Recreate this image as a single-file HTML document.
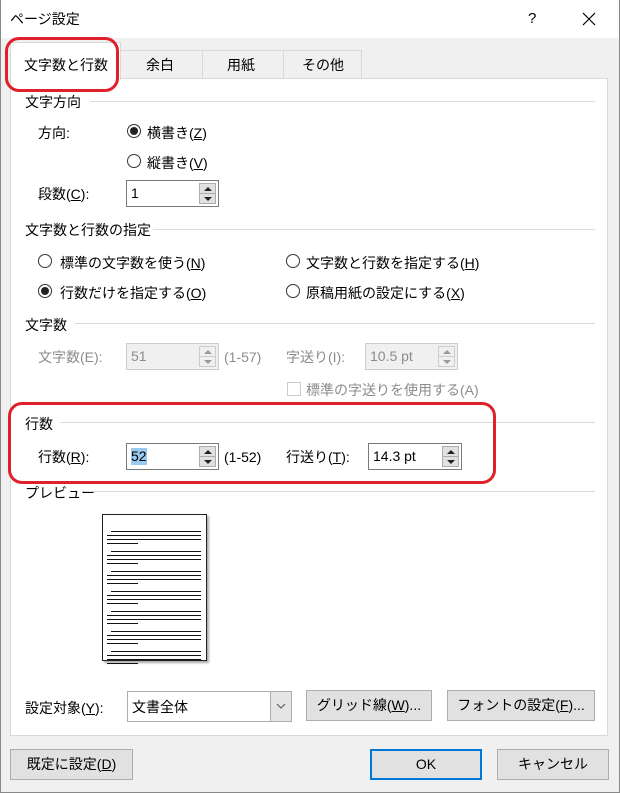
<!DOCTYPE html>
<html><head><meta charset="utf-8"><style>
*{margin:0;padding:0;box-sizing:border-box}
body{width:620px;height:793px;background:#f0f0f0;position:relative;overflow:hidden;font-family:"Liberation Sans","Noto Sans CJK JP",sans-serif;font-size:14px;color:#000}
.a{position:absolute;white-space:nowrap;line-height:16px}
.g{color:#8c8c8c}
.hl{position:absolute;height:1px;background:#dcdcdc}
.rad{position:absolute;width:14px;height:14px;border:1px solid #333;border-radius:50%;background:#fff}
.rad.on::after{content:"";position:absolute;left:2px;top:2px;width:8px;height:8px;border-radius:50%;background:#222}
.spin{position:absolute;height:27px;border:1px solid #7a7a7a;background:#fff}
.spin.dis{border-color:#ccc;background:#f0f0f0}
.spin .t{position:absolute;left:4px;top:4px;line-height:17px}
.spin .b{position:absolute;right:2px;width:17px;height:11px;background:#e1e1e1;border:1px solid #adadad}
.spin.dis .b{border-color:#ccc;background:#f0f0f0}
.b.u{top:2px}.b.d{bottom:2px}
.b.u::after{content:"";position:absolute;left:4px;top:3px;border-left:4px solid transparent;border-right:4px solid transparent;border-bottom:4px solid #222}
.b.d::after{content:"";position:absolute;left:4px;top:3px;border-left:4px solid transparent;border-right:4px solid transparent;border-top:4px solid #222}
.spin.dis .b::after{border-bottom-color:#999;border-top-color:#999}
.btn{position:absolute;height:31px;background:#e1e1e1;border:1px solid #adadad;text-align:center;line-height:29px}
u{text-decoration:underline}
.red{position:absolute;border:3px solid #e0202a;border-radius:14px}
.pl{position:absolute;height:1px;background:#111}
</style></head><body>
<div style="position:absolute;left:0;top:0;width:620px;height:38px;background:#fff"></div>
<div style="position:absolute;left:0;top:0;width:1px;height:793px;background:#888"></div>
<div style="position:absolute;right:0;top:0;width:1px;height:793px;background:#888"></div>
<div style="position:absolute;left:0;bottom:0;width:620px;height:1px;background:#888"></div>
<div class="a" style="left:10px;top:11px;font-size:14px">ページ設定</div>
<div class="a" style="left:528px;top:11px;font-size:15px">?</div>
<svg style="position:absolute;left:582px;top:12px" width="14" height="14"><path d="M1 1L13 13M13 1L1 13" stroke="#000" stroke-width="1.2"/></svg>

<div style="position:absolute;left:120px;top:50px;width:242px;height:29px;background:#f0f0f0;border:1px solid #d9d9d9;border-bottom:none"></div>
<div style="position:absolute;left:202px;top:50px;width:1px;height:28px;background:#d9d9d9"></div>
<div style="position:absolute;left:283px;top:50px;width:1px;height:28px;background:#d9d9d9"></div>
<div style="position:absolute;left:10px;top:78px;width:598px;height:658px;background:#fff;border:1px solid #d9d9d9"></div>
<div style="position:absolute;left:10px;top:42px;width:111px;height:38px;background:#fff;border:1px solid #d9d9d9;border-bottom:none"></div>
<div class="a" style="left:24px;top:57px">文字数と行数</div>
<div class="a" style="left:146px;top:57px">余白</div>
<div class="a" style="left:227px;top:57px">用紙</div>
<div class="a" style="left:302px;top:57px">その他</div>
<div class="red" style="left:5px;top:37px;width:114px;height:55px"></div>

<div class="a" style="left:25px;top:94px">文字方向</div><div class="hl" style="left:90px;top:101px;width:505px"></div>
<div class="a" style="left:38px;top:125px">方向:</div>
<div class="rad on" style="left:127px;top:124px"></div><div class="a" style="left:147px;top:125px">横書き(<u>Z</u>)</div>
<div class="rad" style="left:127px;top:154px"></div><div class="a" style="left:147px;top:155px">縦書き(<u>V</u>)</div>
<div class="a" style="left:38px;top:186px">段数(<u>C</u>):</div>
<div class="spin" style="left:126px;top:180px;width:93px"><span class="t">1</span><div class="b u"></div><div class="b d"></div></div>

<div class="a" style="left:25px;top:222px">文字数と行数の指定</div><div class="hl" style="left:153px;top:229px;width:442px"></div>
<div class="rad" style="left:38px;top:254px"></div><div class="a" style="left:60px;top:255px">標準の文字数を使う(<u>N</u>)</div>
<div class="rad" style="left:286px;top:254px"></div><div class="a" style="left:306px;top:255px">文字数と行数を指定する(<u>H</u>)</div>
<div class="rad on" style="left:38px;top:284px"></div><div class="a" style="left:60px;top:285px">行数だけを指定する(<u>O</u>)</div>
<div class="rad" style="left:286px;top:284px"></div><div class="a" style="left:306px;top:285px">原稿用紙の設定にする(<u>X</u>)</div>

<div class="a" style="left:25px;top:317px">文字数</div><div class="hl" style="left:75px;top:323px;width:520px"></div>
<div class="a g" style="left:38px;top:349px">文字数(E):</div>
<div class="spin dis" style="left:126px;top:343px;width:93px"><span class="t g">51</span><div class="b u"></div><div class="b d"></div></div>
<div class="a g" style="left:224px;top:349px">(1-57)</div>
<div class="a g" style="left:286px;top:349px">字送り(I):</div>
<div class="spin dis" style="left:365px;top:343px;width:93px"><span class="t g">10.5 pt</span><div class="b u"></div><div class="b d"></div></div>
<div style="position:absolute;left:287px;top:382px;width:14px;height:14px;border:1px solid #ccc;background:#fff"></div>
<div class="a g" style="left:306px;top:382px">標準の字送りを使用する(A)</div>

<div class="a" style="left:25px;top:416px">行数</div><div class="hl" style="left:60px;top:422px;width:535px"></div>
<div class="a" style="left:38px;top:449px">行数(<u>R</u>):</div>
<div class="spin" style="left:126px;top:443px;width:93px"><span class="t" style="background:#99c9ef">52</span><div class="b u"></div><div class="b d"></div></div>
<div class="a" style="left:224px;top:449px">(1-52)</div>
<div class="a" style="left:286px;top:449px">行送り(<u>T</u>):</div>
<div class="spin" style="left:368px;top:443px;width:94px"><span class="t">14.3 pt</span><div class="b u"></div><div class="b d"></div></div>
<div class="red" style="left:8px;top:402px;width:488px;height:82px"></div>

<div class="a" style="left:25px;top:485px">プレビュー</div><div class="hl" style="left:85px;top:491px;width:510px"></div>
<div style="position:absolute;left:102px;top:514px;width:105px;height:147px;background:#fff;border:1px solid #222;box-shadow:2px 2px 2px #aaa"></div>

<div class="a" style="left:25px;top:700px">設定対象(<u>Y</u>):</div>
<div style="position:absolute;left:127px;top:691px;width:165px;height:31px;background:#fff;border:1px solid #adadad"></div>
<div style="position:absolute;left:270px;top:692px;width:21px;height:29px;background:#e5e5e5;border-left:1px solid #adadad"></div>
<svg style="position:absolute;left:276px;top:703px" width="10" height="6"><path d="M1 1L5 5L9 1" stroke="#555" fill="none"/></svg>
<div class="a" style="left:132px;top:699px">文書全体</div>
<div class="btn" style="left:306px;top:690px;width:126px">グリッド線(<u>W</u>)...</div>
<div class="btn" style="left:447px;top:690px;width:148px">フォントの設定(<u>F</u>)...</div>

<div class="btn" style="left:10px;top:749px;width:123px">既定に設定(<u>D</u>)</div>
<div class="btn" style="left:370px;top:749px;width:112px;border:2px solid #0078d7;line-height:27px">OK</div>
<div class="btn" style="left:497px;top:749px;width:112px">キャンセル</div>

<div style="position:absolute;left:0;top:0">
<div class="pl" style="left:111px;top:531px;width:90px"></div><div class="pl" style="left:107px;top:535px;width:94px"></div><div class="pl" style="left:107px;top:539px;width:94px"></div><div class="pl" style="left:107px;top:543px;width:31px"></div>
<div class="pl" style="left:111px;top:551px;width:90px"></div><div class="pl" style="left:107px;top:555px;width:94px"></div><div class="pl" style="left:107px;top:559px;width:94px"></div><div class="pl" style="left:107px;top:563px;width:31px"></div>
<div class="pl" style="left:111px;top:571px;width:90px"></div><div class="pl" style="left:107px;top:575px;width:94px"></div><div class="pl" style="left:107px;top:579px;width:94px"></div><div class="pl" style="left:107px;top:583px;width:31px"></div>
<div class="pl" style="left:111px;top:591px;width:90px"></div><div class="pl" style="left:107px;top:595px;width:94px"></div><div class="pl" style="left:107px;top:599px;width:94px"></div><div class="pl" style="left:107px;top:603px;width:31px"></div>
<div class="pl" style="left:111px;top:611px;width:90px"></div><div class="pl" style="left:107px;top:615px;width:94px"></div><div class="pl" style="left:107px;top:619px;width:94px"></div><div class="pl" style="left:107px;top:623px;width:31px"></div>
<div class="pl" style="left:111px;top:631px;width:90px"></div><div class="pl" style="left:107px;top:635px;width:94px"></div><div class="pl" style="left:107px;top:639px;width:94px"></div><div class="pl" style="left:107px;top:643px;width:31px"></div>
<div class="pl" style="left:111px;top:651px;width:90px"></div><div class="pl" style="left:107px;top:655px;width:94px"></div><div class="pl" style="left:107px;top:659px;width:94px"></div><div class="pl" style="left:107px;top:663px;width:31px"></div>
</div>
</body></html>
